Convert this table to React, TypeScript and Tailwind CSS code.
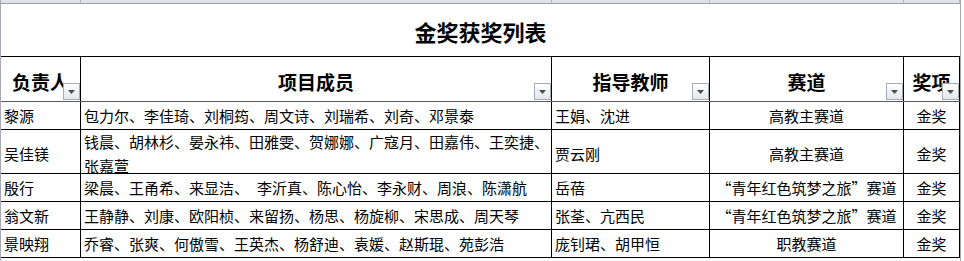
import React from "react";

const COLS = "grid grid-cols-[80px_471px_158px_194px_56px]";

function Drop() {
  return (
    <div className="absolute right-0 bottom-[1px] w-[17px] h-[17px] border border-[#a9adb3] bg-gradient-to-b from-white to-[#e4e6ea] flex items-center justify-center">
      <svg width="9" height="5" viewBox="0 0 9 5" className="mt-[2px]">
        <polygon points="1,0 8,0 4.5,4" fill="#4a4a4a" />
      </svg>
    </div>
  );
}

function Head({ children }: { children: React.ReactNode }) {
  return (
    <div className="relative border-r border-black flex items-center justify-center pt-[4px] text-[19px] font-bold text-black leading-none">
      <span>{children}</span>
      <Drop />
    </div>
  );
}

type Row = { lead: React.ReactNode; members: React.ReactNode; teacher: string; track: string; award: string; h: string };

const rows: Row[] = [
  { lead: "黎源", members: "包力尔、李佳琦、刘桐筠、周文诗、刘瑞希、刘奇、邓景泰", teacher: "王娟、沈进", track: "高教主赛道", award: "金奖", h: "h-[28px]" },
  {
    lead: "吴佳镁",
    members: (
      <>
        钱晨、胡林杉、晏永祎、田雅雯、贺娜娜、广寇月、田嘉伟、王奕捷、
        <br />
        张嘉萱
      </>
    ),
    teacher: "贾云刚",
    track: "高教主赛道",
    award: "金奖",
    h: "h-[44px]",
  },
  {
    lead: "殷行",
    members: (
      <>
        梁晨、王甬希、来显洁、<span className="inline-block w-[8px]" />李沂真、陈心怡、李永财、周浪、陈潇航
      </>
    ),
    teacher: "岳蓓",
    track: "“青年红色筑梦之旅”赛道",
    award: "金奖",
    h: "h-[28px]",
  },
  { lead: "翁文新", members: "王静静、刘康、欧阳桢、来留扬、杨思、杨旋柳、宋思成、周天琴", teacher: "张荃、亢西民", track: "“青年红色筑梦之旅”赛道", award: "金奖", h: "h-[28px]" },
  { lead: "景映翔", members: "乔睿、张爽、何傲雪、王英杰、杨舒迪、袁媛、赵斯琨、苑彭浩", teacher: "庞钊珺、胡甲恒", track: "职教赛道", award: "金奖", h: "h-[28px]" },
];

export default function App() {
  return (
    <div
      lang="zh-CN"
      className="w-[964px] h-[261px] bg-white overflow-hidden text-black"
      style={{ fontFamily: '"Noto Sans CJK SC", "Noto Sans", sans-serif' }}
    >
      <div className="w-[961px] border-l border-r border-[#a7abb1] h-[261px] flex flex-col">
        {/* spreadsheet strip above */}
        <div className={`${COLS} h-[4px] bg-[#dfe2e6] border-b border-[#9da2a8]`}>
          <div className="border-r border-[#b4b8be]" />
          <div className="border-r border-[#b4b8be]" />
          <div className="border-r border-[#b4b8be]" />
          <div className="border-r border-[#b4b8be]" />
          <div className="border-r border-[#b4b8be]" />
        </div>
        {/* title */}
        <div className="h-[53px] border-b border-black flex items-center justify-center pt-[2px]">
          <span className="text-[22px] font-bold leading-none tracking-[0px]">金奖获奖列表</span>
        </div>
        {/* header */}
        <div className={`${COLS} h-[45px] border-b border-[#5a5a5a]`}>
          <Head>负责人</Head>
          <Head>项目成员</Head>
          <Head>指导教师</Head>
          <Head>赛道</Head>
          <Head>奖项</Head>
        </div>
        {rows.map((r, i) => (
          <div key={i} className={`${COLS} ${r.h} border-b border-black text-[15px] leading-[24px]`}>
            <div className="border-r border-black flex items-center px-[3px] whitespace-nowrap">{r.lead}</div>
            <div className="border-r border-black flex items-center px-[3px] whitespace-nowrap overflow-visible">
              <div>{r.members}</div>
            </div>
            <div className="border-r border-black flex items-center px-[3px] whitespace-nowrap">{r.teacher}</div>
            <div className="border-r border-black flex items-center justify-center whitespace-nowrap">{r.track}</div>
            <div className="border-r border-black flex items-center justify-center whitespace-nowrap">{r.award}</div>
          </div>
        ))}
        <div className="flex-1" />
      </div>
    </div>
  );
}
